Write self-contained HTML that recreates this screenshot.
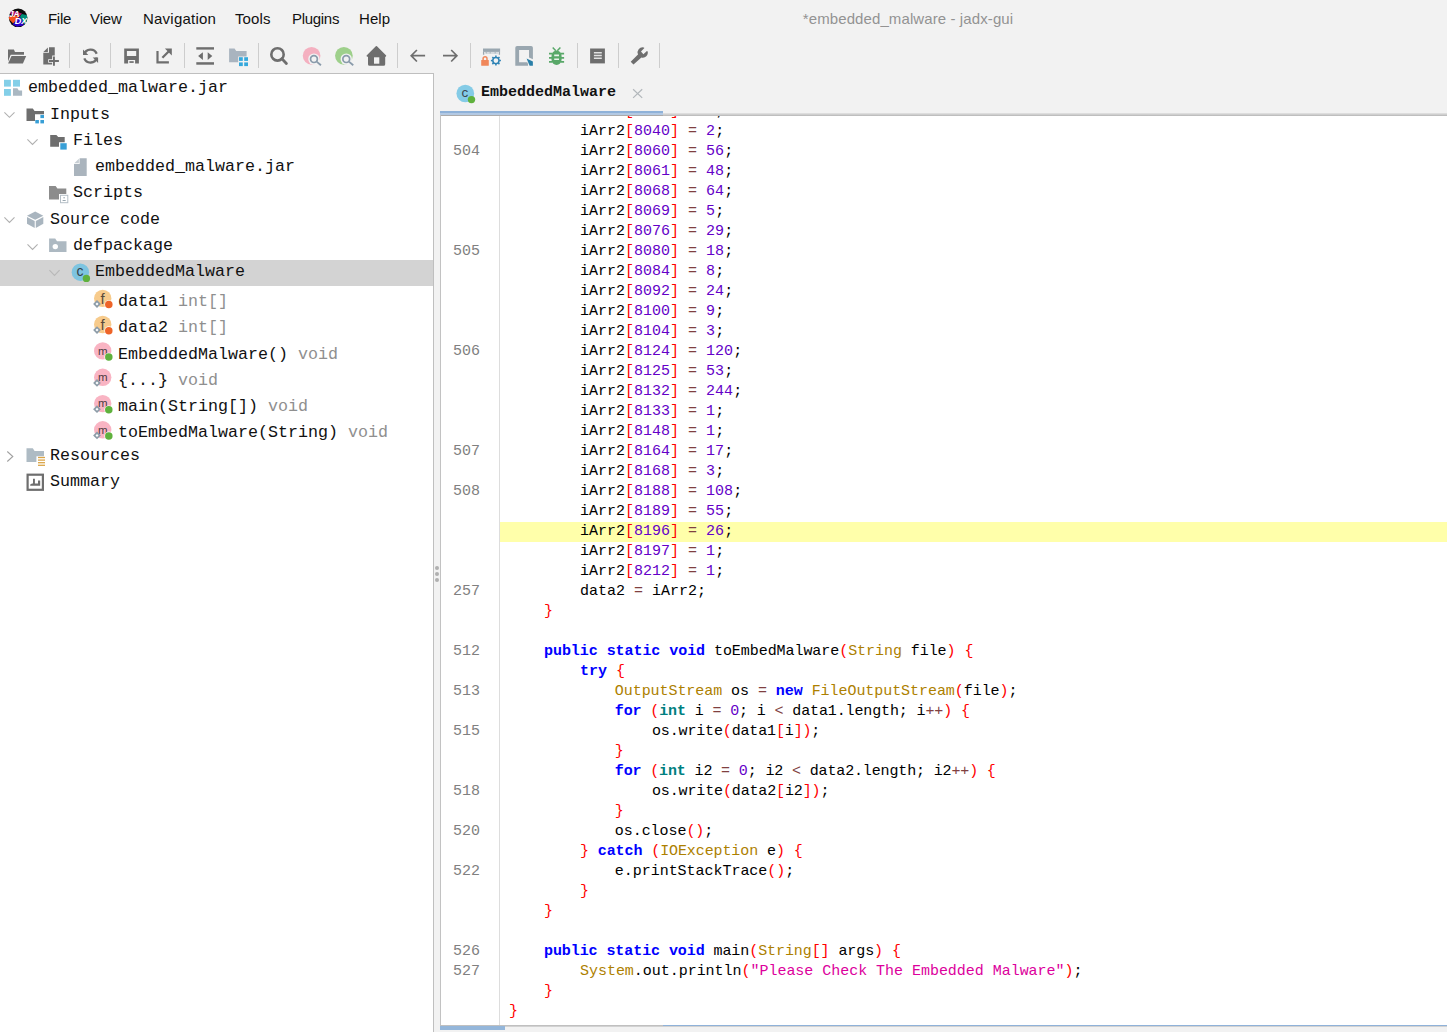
<!DOCTYPE html>
<html><head><meta charset="utf-8"><title>jadx-gui</title>
<style>
html,body{margin:0;padding:0}
body{width:1447px;height:1032px;background:#f2f2f2;position:relative;overflow:hidden;font-family:"Liberation Sans",sans-serif;color:#000}
.ic,.chev{position:absolute;display:block;overflow:visible}
.mi{position:absolute;top:10px;font-size:15px;line-height:18px;white-space:nowrap;color:#111}
#title{position:absolute;top:10px;left:708px;width:400px;text-align:center;font-size:15px;line-height:18px;color:#939393;white-space:nowrap;letter-spacing:0.1px}
.sep{position:absolute;top:43px;width:1px;height:25px;background:#cdcdcd}
#treetop{position:absolute;left:0;top:73px;width:434px;height:1.3px;background:#bfbfbf}
#tree{position:absolute;left:0;top:74px;width:433px;height:958px;background:#fff;overflow:hidden}
#tree .in{position:absolute;left:0;top:-74px;width:433px;height:1032px}
#sel{position:absolute;left:0;top:260px;width:433px;height:26px;background:#d3d3d3}
.tr{position:absolute;font-family:"Liberation Mono",monospace;font-size:16.66px;line-height:26px;white-space:pre;color:#111}
.tr i{font-style:normal;color:#8f8f8f}
#div{position:absolute;left:433px;top:73px;width:7px;height:959px;background:#f2f2f2;border-left:1px solid #bfbfbf;box-sizing:border-box}
.dot{position:absolute;left:435.25px;width:3.5px;height:3.5px;border-radius:2px;background:#b0b0b0}
#tabtxt{position:absolute;left:481px;top:84px;font-family:"Liberation Mono",monospace;font-weight:bold;font-size:15px;line-height:18px;color:#111;white-space:pre}
#tabx{position:absolute;left:632px;top:88px}
#tabul{position:absolute;left:440px;top:111px;width:223px;height:4.5px;background:linear-gradient(#8fb2d9 0,#8fb2d9 44%,#b3c9e3 44%,#b3c9e3 78%,#ababab 78%)}
#tabln{position:absolute;left:663px;top:112.5px;width:784px;height:3px;background:linear-gradient(#e4e4e4,#cfcfcf 50%,#b6b6b6)}
#ed{position:absolute;left:441px;top:115.5px;width:1006px;height:909.5px;background:#fff;overflow:hidden}
#ed .in{position:absolute;left:-441px;top:-115.5px;width:1447px;height:1032px}
#edl{position:absolute;left:440px;top:115px;width:1px;height:911px;background:#c2c2c2}
#gsep{position:absolute;left:499px;top:116px;width:1px;height:909px;background:#dddddd}
.cl,.ln{position:absolute;font-family:"Liberation Mono",monospace;font-size:15px;line-height:20px;height:20px;white-space:pre;color:#000}
.ln{left:453px;color:#808080}
.hl{position:absolute;left:500px;width:947px;height:20px;background:#ffffaa}
.k{color:#0000ff;font-weight:bold}
.t{color:#008080;font-weight:bold}
.f{color:#ad8000}
.n{color:#6400c8}
.s{color:#dc009c}
.p{color:#ff0000}
.o{color:#804040}
#botln{position:absolute;left:440px;top:1025px;width:1007px;height:1.7px;background:linear-gradient(#c0c0c0 0,#c0c0c0 60%,#d2d2d2 60%)}
#botbl{position:absolute;left:440px;top:1026px;width:65px;height:4px;background:#94b6da}
#botbl2{position:absolute;left:663px;top:1025px;width:784px;height:1px;background:#8fb2d9}
</style></head>
<body>
<svg class="ic" style="left:4px;top:4px" width="30" height="28" viewBox="4 4 30 28">
<defs><clipPath id="lc"><circle cx="18.1" cy="17.8" r="9.3"/></clipPath></defs>
<circle cx="18.1" cy="17.8" r="9.3" fill="#0c0c0c"/>
<g clip-path="url(#lc)">
<path d="M11.6 10.2L22 13.4L20.3 15.6H12.9L9.6 13Z" fill="#b0106c"/>
<path d="M8.4 16.2L20.4 15.3L13.2 23.6L8.6 18.8Z" fill="#f4511e"/>
<path d="M19.5 16.6L23.2 20.3L23.6 25.6L17 26.7L12.6 24.6Z" fill="#2a00c8"/>
<path d="M21.8 13.9L27.4 15.2L27.6 21.6L24.1 24.3L20 16.7Z" fill="#008f78"/>
<text x="9" y="17.3" font-family="Liberation Sans, sans-serif" font-weight="bold" font-style="italic" font-size="9.2" fill="#fff" textLength="10.6" lengthAdjust="spacingAndGlyphs">JA</text>
<text x="14.8" y="24.4" font-family="Liberation Sans, sans-serif" font-weight="bold" font-style="italic" font-size="8.8" fill="#fff" textLength="12.6" lengthAdjust="spacingAndGlyphs">DX</text>
</g>
</svg>
<div class="mi" style="left:48px;letter-spacing:-0.3px">File</div><div class="mi" style="left:90px;letter-spacing:-0.1px">View</div><div class="mi" style="left:143px;letter-spacing:0.22px">Navigation</div><div class="mi" style="left:235px;letter-spacing:0.12px">Tools</div><div class="mi" style="left:292px;letter-spacing:-0.3px">Plugins</div><div class="mi" style="left:359px;letter-spacing:0.08px">Help</div>
<div id="title">*embedded_malware - jadx-gui</div>
<div class="sep" style="left:69px"></div><div class="sep" style="left:110px"></div><div class="sep" style="left:184px"></div><div class="sep" style="left:258px"></div><div class="sep" style="left:397px"></div><div class="sep" style="left:470px"></div><div class="sep" style="left:577px"></div><div class="sep" style="left:618px"></div><div class="sep" style="left:659px"></div>
<svg class="ic" style="left:0;top:40px" width="700" height="34" viewBox="0 40 700 34"><path d="M8 49.6H13.9L15 52H24V54.7H10.7L8 61.6Z" fill="#6e6e6e"/><path d="M11.5 56H26.2L22.9 63.4H8.1Z" fill="#6e6e6e"/><path d="M47.9 47.4V51.9H43.4Z" fill="#6e6e6e"/><path d="M49 47.2H54.75V58H52.6V64.4H43.3V52.7H49Z" fill="#6e6e6e"/><path d="M53.95 55.6V65.7M48.2 61H58.9" stroke="#f2f2f2" stroke-width="3.5" fill="none"/><path d="M53.95 56.4V65.7M49 61H58.9" stroke="#6e6e6e" stroke-width="1.9" fill="none"/><path d="M84.2 54.6A6.6 6.6 0 0 1 96.7 53.8M96.8 57.6A6.6 6.6 0 0 1 84.3 58.4" fill="none" stroke="#6e6e6e" stroke-width="2.3"/><path d="M83 49.6V54.9H88.3Z M98.1 62.9V57.5H92.7Z" fill="#6e6e6e"/><path d="M124.2 48.5H138.9V63.5H124.2Z M126.9 51.1V56.1H136.2V51.1Z M128.1 60.1V63.5H135.1V60.1Z" fill-rule="evenodd" fill="#6e6e6e"/><rect x="129.4" y="61.2" width="4.3" height="1.7" fill="#6e6e6e"/><path d="M157.5 51.1V62.45H168.9" fill="none" stroke="#6e6e6e" stroke-width="2.2"/><path d="M162.4 57.8L169.4 50.8" stroke="#6e6e6e" stroke-width="2.3"/><path d="M164.9 48.6H171.8V55.6Z" fill="#6e6e6e"/><rect x="196.3" y="47.2" width="17.7" height="2.4" fill="#6e6e6e"/><rect x="196.3" y="62.2" width="17.7" height="2.5" fill="#6e6e6e"/><path d="M198.1 56.1L202.9 52.3V59.9Z M212.3 56.1L207.7 52.3V59.9Z" fill="#6e6e6e"/><path d="M229.1 48.5H234.6L236.2 51.1H246.6V56.4H238.2V62.2H229.1Z" fill="#a9b4bf"/><rect x="239" y="57.2" width="3.8" height="3.7" fill="#35a8dc"/><rect x="244.2" y="57.2" width="3.8" height="3.7" fill="#35a8dc"/><rect x="239" y="62.4" width="3.8" height="3.7" fill="#35a8dc"/><rect x="244.2" y="62.4" width="3.8" height="3.7" fill="#35a8dc"/><circle cx="277.5" cy="54.4" r="6.2" fill="none" stroke="#6e6e6e" stroke-width="2.6"/><path d="M281.9 58.8L286.4 63.4" stroke="#6e6e6e" stroke-width="2.8" stroke-linecap="round"/><circle cx="311.6" cy="55.85" r="8.85" fill="#f4b0c0"/><circle cx="313.95" cy="59.1" r="5.7" fill="#f2f2f2"/><path d="M316.95 61.8L321.35 65.7" stroke="#f2f2f2" stroke-width="3.2"/><circle cx="313.95" cy="59.1" r="3.4" fill="none" stroke="#8a9bab" stroke-width="1.7"/><path d="M316.65 61.6L320.95 65.3" stroke="#8a9bab" stroke-width="1.8"/><circle cx="343.9" cy="55.85" r="8.85" fill="#9ed08b"/><circle cx="346.25" cy="59.1" r="5.7" fill="#f2f2f2"/><path d="M349.25 61.8L353.65 65.7" stroke="#f2f2f2" stroke-width="3.2"/><circle cx="346.25" cy="59.1" r="3.4" fill="none" stroke="#8a9bab" stroke-width="1.7"/><path d="M348.95 61.6L353.25 65.3" stroke="#8a9bab" stroke-width="1.8"/><path d="M376.4 46.9L385.4 55.9H384.4V64.2A0.8 0.8 0 0 1 383.6 65H369.6A0.8 0.8 0 0 1 368.8 64.2V55.9H367.4Z" fill="#6e6e6e" stroke="#6e6e6e" stroke-width="1.6" stroke-linejoin="round"/><rect x="374" y="57.3" width="5.3" height="6.4" fill="#f2f2f2"/><path d="M425.1 55.7H411.6M416.9 50L411.2 55.7L416.9 61.5" fill="none" stroke="#6e6e6e" stroke-width="1.7"/><path d="M443 55.7H456.9M451.2 50L456.9 55.7L451.2 61.5" fill="none" stroke="#6e6e6e" stroke-width="1.7"/><rect x="483" y="48.5" width="17.1" height="3.4" fill="#9aa7b0"/><path d="M483.6 51.9V54.8M486.2 51.9V53.4M490.2 51.9V53.6M495.2 51.9V53.4M499.4 51.9V54.8" stroke="#9aa7b0" stroke-width="1.3" fill="none"/><path d="M486.2 53H498" stroke="#c3ccd2" stroke-width="1.2"/><rect x="481.2" y="59.9" width="7.6" height="5.8" rx="0.5" fill="#f0875a"/><path d="M483.1 60.2V58.6A1.95 1.95 0 0 1 487 58.6V60.2" fill="none" stroke="#f0875a" stroke-width="1.5"/><circle cx="495.9" cy="60.6" r="3.1" fill="none" stroke="#2e83b5" stroke-width="1.5"/><path d="M499.20 60.60L500.90 60.60" stroke="#2e83b5" stroke-width="1.5"/><path d="M498.23 62.93L499.44 64.14" stroke="#2e83b5" stroke-width="1.5"/><path d="M495.90 63.90L495.90 65.60" stroke="#2e83b5" stroke-width="1.5"/><path d="M493.57 62.93L492.36 64.14" stroke="#2e83b5" stroke-width="1.5"/><path d="M492.60 60.60L490.90 60.60" stroke="#2e83b5" stroke-width="1.5"/><path d="M493.57 58.27L492.36 57.06" stroke="#2e83b5" stroke-width="1.5"/><path d="M495.90 57.30L495.90 55.60" stroke="#2e83b5" stroke-width="1.5"/><path d="M498.23 58.27L499.44 57.06" stroke="#2e83b5" stroke-width="1.5"/><path d="M517.1 46H531.1A1.8 1.8 0 0 1 532.9 47.8V59.2L529 57.4V50H519.1V62.2H528V65.7H515.3V47.8A1.8 1.8 0 0 1 517.1 46Z" fill="#9aa7b0"/><path d="M526.6 58.4L532.9 61.6V65.7H529.6Z" fill="#f2f2f2" stroke="#f2f2f2" stroke-width="1.6"/><path d="M526.6 58.4L532.9 61.6V65.7H529.6Z" fill="#2a7fa8"/><path d="M552.7 47.6L555.8 50.8M560.4 47.6L557.3 50.8" stroke="#59a869" stroke-width="1.5"/><path d="M551.5 56A5.05 5.5 0 0 1 561.6 56V59.6A5.05 5.3 0 0 1 551.5 59.6Z" fill="#59a869"/><path d="M549 53.6H552.4M549 57.9H552.4M549 61.9H552.4M560.6 53.6H564.1M560.6 57.9H564.1M560.6 61.9H564.1" stroke="#59a869" stroke-width="1.6"/><path d="M554.2 55.4H559M554.2 59.2H559" stroke="#eaf3ec" stroke-width="1.6"/><rect x="590.1" y="48.5" width="14.8" height="14.9" fill="#6e6e6e"/><path d="M593.9 52.8H601.8M593.9 55.5H601.8M593.9 58.2H601.8" stroke="#e2e2e2" stroke-width="1.4"/><path d="M644.4 48.1L641 51.4L643.4 54.2L646.9 51L647.7 51.4A5.1 5.1 0 0 1 641.4 57.5L633.5 64.5L630.7 61.7L638 54.6A5.1 5.1 0 0 1 643.8 47.5Z" fill="#6e6e6e"/></svg>
<div id="treetop"></div>
<div id="tree"><div class="in">
<div id="sel"></div>
<svg class="ic" style="left:0;top:0" width="433" height="1032" viewBox="0 0 433 1032"><rect x="4" y="79.8" width="6.9" height="6.8" fill="#83cfe8"/><rect x="13" y="79.8" width="7" height="6.8" fill="#83cfe8"/><rect x="4" y="89" width="6.9" height="6.8" fill="#83cfe8"/><path d="M13 88.3H17.4L18.8 90.6H22.1V95.8H13Z" fill="#aab8c2"/><path d="M4.4 112.3 L9.45 117.3 L14.5 112.3" fill="none" stroke="#b0b0b0" stroke-width="1.1"/><path d="M26.5 108.4 H32.8 L34.6 111 H44 V114.3 H35 V120.9 H26.5 Z" fill="#6e6e6e"/><rect x="40.4" y="114.9" width="3.6" height="3.2" fill="#389fd6"/><rect x="35.3" y="120" width="3.6" height="3.4" fill="#389fd6"/><rect x="40.4" y="120" width="3.6" height="3.4" fill="#389fd6"/><path d="M27.4 139.3 L32.5 144.4 L37.6 139.3" fill="none" stroke="#b0b0b0" stroke-width="1.1"/><path d="M50.2 135.1 H56.4 L58.2 137.1 H64.7 V142.3 H59 V146.7 H50.2 Z" fill="#6e6e6e"/><rect x="60.3" y="143.2" width="6.4" height="6.4" fill="#389fd6"/><path d="M79.6 158.2H86.7V176H74V163.9H79.6Z" fill="#aab4bd"/><path d="M78.9 158.8V163.2H74.3Z" fill="#c6cdd3"/><path d="M49 186 H55.6 L57.4 188.4 H66.3 V194.1 H59 V199.6 H49 Z" fill="#8c8c8c"/><rect x="60.5" y="195.3" width="7.3" height="7.4" fill="#fff" stroke="#b4bec6" stroke-width="1"/><circle cx="64.1" cy="197.8" r="0.8" fill="#9aa7b0"/><path d="M62.6 200.5H65.7" stroke="#9aa7b0" stroke-width="1"/><path d="M4.4 217.3 L9.45 222.5 L14.5 217.3" fill="none" stroke="#b0b0b0" stroke-width="1.1"/><path d="M35.2 211.5L43.3 215.7L35.2 219.7L27 215.7Z" fill="#a9b5bf"/><path d="M27 217.1L34.7 221V228L27 223.7Z" fill="#a9b5bf"/><path d="M43.3 217.1L35.8 221V228L43.3 223.7Z" fill="#a9b5bf"/><path d="M27.5 244.4 L32.55 249.5 L37.6 244.4" fill="none" stroke="#b0b0b0" stroke-width="1.1"/><path d="M49.1 238.5 H55.2 L57 241.2 H66.5 V252 H49.1 Z" fill="#adb9c2"/><circle cx="55.3" cy="246.6" r="2.7" fill="#fff"/><path d="M49.4 270.2 L54.5 275.5 L59.6 270.2" fill="none" stroke="#b8b8b8" stroke-width="1.1"/><circle cx="80.4" cy="272.2" r="8.7" fill="#7dc4e0"/><text x="80.1" y="275.9" font-family="Liberation Sans, sans-serif" font-size="14" text-anchor="middle" fill="#33404a">c</text><circle cx="86.4" cy="278.4" r="3.7" fill="#5fb13d"/><circle cx="102.7" cy="298.4" r="8.7" fill="#f7cb8c"/><text x="102.5" y="303.6" font-family="Liberation Sans, sans-serif" font-size="15" text-anchor="middle" fill="#5a4a3a">f</text><path d="M97 300.1L100.9 304L97 307.9L93.1 304Z" fill="#8d9ca8"/><path d="M97 302.5L98.5 304L97 305.5L95.5 304Z" fill="#fff"/><circle cx="108.8" cy="304.6" r="4.4" fill="#fff"/><circle cx="108.8" cy="304.6" r="3.75" fill="#ee6428"/><circle cx="102.7" cy="324.5" r="8.7" fill="#f7cb8c"/><text x="102.5" y="329.7" font-family="Liberation Sans, sans-serif" font-size="15" text-anchor="middle" fill="#5a4a3a">f</text><path d="M97 326.2L100.9 330.1L97 334L93.1 330.1Z" fill="#8d9ca8"/><path d="M97 328.6L98.5 330.1L97 331.6L95.5 330.1Z" fill="#fff"/><circle cx="108.8" cy="330.7" r="4.4" fill="#fff"/><circle cx="108.8" cy="330.7" r="3.75" fill="#ee6428"/><circle cx="102.7" cy="350.9" r="8.7" fill="#f9b4c3"/><text x="102.8" y="354.6" font-family="Liberation Sans, sans-serif" font-size="11.5" text-anchor="middle" fill="#4a3a40">m</text><circle cx="108.8" cy="357.1" r="4.4" fill="#fff"/><circle cx="108.8" cy="357.1" r="3.75" fill="#5fb13d"/><circle cx="102.7" cy="377.3" r="8.7" fill="#f9b4c3"/><text x="102.8" y="381" font-family="Liberation Sans, sans-serif" font-size="11.5" text-anchor="middle" fill="#4a3a40">m</text><path d="M97 379L100.9 382.9L97 386.8L93.1 382.9Z" fill="#8d9ca8"/><path d="M97 381.4L98.5 382.9L97 384.4L95.5 382.9Z" fill="#fff"/><circle cx="102.7" cy="403.6" r="8.7" fill="#f9b4c3"/><text x="102.8" y="407.3" font-family="Liberation Sans, sans-serif" font-size="11.5" text-anchor="middle" fill="#4a3a40">m</text><path d="M97 405.3L100.9 409.2L97 413.1L93.1 409.2Z" fill="#8d9ca8"/><path d="M97 407.7L98.5 409.2L97 410.7L95.5 409.2Z" fill="#fff"/><circle cx="108.8" cy="409.8" r="4.4" fill="#fff"/><circle cx="108.8" cy="409.8" r="3.75" fill="#5fb13d"/><circle cx="102.7" cy="429.8" r="8.7" fill="#f9b4c3"/><text x="102.8" y="433.5" font-family="Liberation Sans, sans-serif" font-size="11.5" text-anchor="middle" fill="#4a3a40">m</text><path d="M97 431.5L100.9 435.4L97 439.3L93.1 435.4Z" fill="#8d9ca8"/><path d="M97 433.9L98.5 435.4L97 436.9L95.5 435.4Z" fill="#fff"/><circle cx="108.8" cy="436" r="4.4" fill="#fff"/><circle cx="108.8" cy="436" r="3.75" fill="#5fb13d"/><path d="M7.3 451.5 L12.8 456.5 L7.3 461.5" fill="none" stroke="#a0a0a0" stroke-width="1.1"/><path d="M26.5 448.2 H32.8 L34.6 450.9 H44 V456.3 H36.4 V461.9 H26.5 Z" fill="#aebbc4"/><path d="M38 457.5H45" stroke="#dba548" stroke-width="1.3"/><path d="M38 460.1H45" stroke="#dba548" stroke-width="1.3"/><path d="M38 462.7H45" stroke="#dba548" stroke-width="1.3"/><path d="M38 465.3H45" stroke="#dba548" stroke-width="1.3"/><rect x="27.6" y="474.7" width="15.3" height="15.1" fill="#fff" stroke="#6e6e6e" stroke-width="2.2"/><path d="M30.2 485.8V484.6L32 483.4H33V478.8H34.9V483.4H38V480.4H40.2V485.8Z" fill="#6e6e6e"/></svg>
<div class="tr" style="left:28px;top:75.2px">embedded_malware.jar</div>
<div class="tr" style="left:50px;top:101.5px">Inputs</div>
<div class="tr" style="left:73px;top:127.7px">Files</div>
<div class="tr" style="left:95px;top:153.9px">embedded_malware.jar</div>
<div class="tr" style="left:73px;top:180.1px">Scripts</div>
<div class="tr" style="left:50px;top:206.5px">Source code</div>
<div class="tr" style="left:73px;top:232.7px">defpackage</div>
<div class="tr" style="left:95px;top:258.9px">EmbeddedMalware</div>
<div class="tr" style="left:118px;top:289.2px">data1 <i>int[]</i></div>
<div class="tr" style="left:118px;top:315.3px">data2 <i>int[]</i></div>
<div class="tr" style="left:118px;top:341.7px">EmbeddedMalware() <i>void</i></div>
<div class="tr" style="left:118px;top:367.9px">{...} <i>void</i></div>
<div class="tr" style="left:118px;top:394.1px">main(String[]) <i>void</i></div>
<div class="tr" style="left:118px;top:420.3px">toEmbedMalware(String) <i>void</i></div>
<div class="tr" style="left:50px;top:443.3px">Resources</div>
<div class="tr" style="left:50px;top:469.3px">Summary</div>
</div></div>
<div id="div"></div>
<div class="dot" style="top:566.05px"></div><div class="dot" style="top:572.25px"></div><div class="dot" style="top:578.45px"></div>
<svg class="ic" style="left:440px;top:74px" width="60" height="40" viewBox="440 74 60 40"><circle cx="465.3" cy="93.5" r="8.85" fill="#84cbe6"/><text x="464.9" y="97.1" font-family="Liberation Sans, sans-serif" font-size="13.5" text-anchor="middle" fill="#3a4650">c</text><circle cx="471.5" cy="99.6" r="3.7" fill="#5fb13d"/></svg>
<div id="tabtxt">EmbeddedMalware</div>
<svg id="tabx" class="ic" width="12" height="12" viewBox="632 88 12 12"><path d="M633.1 89.2L642.2 97.9M642.2 89.2L633.1 97.9" stroke="#b2b7bb" stroke-width="1.2" fill="none"/></svg>
<div id="tabln"></div>
<div id="tabul"></div>
<div id="edl"></div>
<div id="ed"><div class="in">
<div class="cl" style="left:580px;top:102px">iArr2<span class="p">[</span><span class="n">8036</span><span class="p">]</span> <span class="o">=</span> <span class="n">1</span>;</div>
<div class="cl" style="left:580px;top:122px">iArr2<span class="p">[</span><span class="n">8040</span><span class="p">]</span> <span class="o">=</span> <span class="n">2</span>;</div>
<div class="cl" style="left:580px;top:142px">iArr2<span class="p">[</span><span class="n">8060</span><span class="p">]</span> <span class="o">=</span> <span class="n">56</span>;</div>
<div class="cl" style="left:580px;top:162px">iArr2<span class="p">[</span><span class="n">8061</span><span class="p">]</span> <span class="o">=</span> <span class="n">48</span>;</div>
<div class="cl" style="left:580px;top:182px">iArr2<span class="p">[</span><span class="n">8068</span><span class="p">]</span> <span class="o">=</span> <span class="n">64</span>;</div>
<div class="cl" style="left:580px;top:202px">iArr2<span class="p">[</span><span class="n">8069</span><span class="p">]</span> <span class="o">=</span> <span class="n">5</span>;</div>
<div class="cl" style="left:580px;top:222px">iArr2<span class="p">[</span><span class="n">8076</span><span class="p">]</span> <span class="o">=</span> <span class="n">29</span>;</div>
<div class="cl" style="left:580px;top:242px">iArr2<span class="p">[</span><span class="n">8080</span><span class="p">]</span> <span class="o">=</span> <span class="n">18</span>;</div>
<div class="cl" style="left:580px;top:262px">iArr2<span class="p">[</span><span class="n">8084</span><span class="p">]</span> <span class="o">=</span> <span class="n">8</span>;</div>
<div class="cl" style="left:580px;top:282px">iArr2<span class="p">[</span><span class="n">8092</span><span class="p">]</span> <span class="o">=</span> <span class="n">24</span>;</div>
<div class="cl" style="left:580px;top:302px">iArr2<span class="p">[</span><span class="n">8100</span><span class="p">]</span> <span class="o">=</span> <span class="n">9</span>;</div>
<div class="cl" style="left:580px;top:322px">iArr2<span class="p">[</span><span class="n">8104</span><span class="p">]</span> <span class="o">=</span> <span class="n">3</span>;</div>
<div class="cl" style="left:580px;top:342px">iArr2<span class="p">[</span><span class="n">8124</span><span class="p">]</span> <span class="o">=</span> <span class="n">120</span>;</div>
<div class="cl" style="left:580px;top:362px">iArr2<span class="p">[</span><span class="n">8125</span><span class="p">]</span> <span class="o">=</span> <span class="n">53</span>;</div>
<div class="cl" style="left:580px;top:382px">iArr2<span class="p">[</span><span class="n">8132</span><span class="p">]</span> <span class="o">=</span> <span class="n">244</span>;</div>
<div class="cl" style="left:580px;top:402px">iArr2<span class="p">[</span><span class="n">8133</span><span class="p">]</span> <span class="o">=</span> <span class="n">1</span>;</div>
<div class="cl" style="left:580px;top:422px">iArr2<span class="p">[</span><span class="n">8148</span><span class="p">]</span> <span class="o">=</span> <span class="n">1</span>;</div>
<div class="cl" style="left:580px;top:442px">iArr2<span class="p">[</span><span class="n">8164</span><span class="p">]</span> <span class="o">=</span> <span class="n">17</span>;</div>
<div class="cl" style="left:580px;top:462px">iArr2<span class="p">[</span><span class="n">8168</span><span class="p">]</span> <span class="o">=</span> <span class="n">3</span>;</div>
<div class="cl" style="left:580px;top:482px">iArr2<span class="p">[</span><span class="n">8188</span><span class="p">]</span> <span class="o">=</span> <span class="n">108</span>;</div>
<div class="cl" style="left:580px;top:502px">iArr2<span class="p">[</span><span class="n">8189</span><span class="p">]</span> <span class="o">=</span> <span class="n">55</span>;</div>
<div class="hl" style="top:522px"></div>
<div class="cl" style="left:580px;top:522px">iArr2<span class="p">[</span><span class="n">8196</span><span class="p">]</span> <span class="o">=</span> <span class="n">26</span>;</div>
<div class="cl" style="left:580px;top:542px">iArr2<span class="p">[</span><span class="n">8197</span><span class="p">]</span> <span class="o">=</span> <span class="n">1</span>;</div>
<div class="cl" style="left:580px;top:562px">iArr2<span class="p">[</span><span class="n">8212</span><span class="p">]</span> <span class="o">=</span> <span class="n">1</span>;</div>
<div class="cl" style="left:580px;top:582px">data2 <span class="o">=</span> iArr2;</div>
<div class="cl" style="left:544px;top:602px"><span class="p">}</span></div>
<div class="cl" style="left:544px;top:642px;letter-spacing:-0.057px"><span class="k">public</span> <span class="k">static</span> <span class="k">void</span> toEmbedMalware<span class="p">(</span><span class="f">String</span> file<span class="p">)</span> <span class="p">{</span></div>
<div class="cl" style="left:580px;top:662px"><span class="k">try</span> <span class="p">{</span></div>
<div class="cl" style="left:614.8px;top:682px;letter-spacing:-0.055px"><span class="f">OutputStream</span> os <span class="o">=</span> <span class="k">new</span> <span class="f">FileOutputStream</span><span class="p">(</span>file<span class="p">)</span>;</div>
<div class="cl" style="left:614.8px;top:702px;letter-spacing:-0.128px"><span class="k">for</span> <span class="p">(</span><span class="t">int</span> i <span class="o">=</span> <span class="n">0</span>; i <span class="o">&lt;</span> data1.length; i<span class="o">++</span><span class="p">)</span> <span class="p">{</span></div>
<div class="cl" style="left:652px;top:722px;letter-spacing:-0.15px">os.write<span class="p">(</span>data1<span class="p">[</span>i<span class="p">])</span>;</div>
<div class="cl" style="left:614.8px;top:742px"><span class="p">}</span></div>
<div class="cl" style="left:614.8px;top:762px;letter-spacing:-0.144px"><span class="k">for</span> <span class="p">(</span><span class="t">int</span> i2 <span class="o">=</span> <span class="n">0</span>; i2 <span class="o">&lt;</span> data2.length; i2<span class="o">++</span><span class="p">)</span> <span class="p">{</span></div>
<div class="cl" style="left:652px;top:782px;letter-spacing:-0.142px">os.write<span class="p">(</span>data2<span class="p">[</span>i2<span class="p">])</span>;</div>
<div class="cl" style="left:614.8px;top:802px"><span class="p">}</span></div>
<div class="cl" style="left:614.8px;top:822px;letter-spacing:-0.05px">os.close<span class="p">()</span>;</div>
<div class="cl" style="left:580px;top:842px;letter-spacing:-0.1px"><span class="p">}</span> <span class="k">catch</span> <span class="p">(</span><span class="f">IOException</span> e<span class="p">)</span> <span class="p">{</span></div>
<div class="cl" style="left:614.8px;top:862px;letter-spacing:-0.03px">e.printStackTrace<span class="p">()</span>;</div>
<div class="cl" style="left:580px;top:882px"><span class="p">}</span></div>
<div class="cl" style="left:544px;top:902px"><span class="p">}</span></div>
<div class="cl" style="left:544px;top:942px;letter-spacing:-0.08px"><span class="k">public</span> <span class="k">static</span> <span class="k">void</span> main<span class="p">(</span><span class="f">String</span><span class="p">[]</span> args<span class="p">)</span> <span class="p">{</span></div>
<div class="cl" style="left:580px;top:962px;letter-spacing:-0.03px"><span class="f">System</span>.out.println<span class="p">(</span><span class="s">"Please Check The Embedded Malware"</span><span class="p">)</span>;</div>
<div class="cl" style="left:544px;top:982px"><span class="p">}</span></div>
<div class="cl" style="left:509px;top:1002px"><span class="p">}</span></div>
<div class="ln" style="top:142px">504</div>
<div class="ln" style="top:242px">505</div>
<div class="ln" style="top:342px">506</div>
<div class="ln" style="top:442px">507</div>
<div class="ln" style="top:482px">508</div>
<div class="ln" style="top:582px">257</div>
<div class="ln" style="top:642px">512</div>
<div class="ln" style="top:682px">513</div>
<div class="ln" style="top:722px">515</div>
<div class="ln" style="top:782px">518</div>
<div class="ln" style="top:822px">520</div>
<div class="ln" style="top:862px">522</div>
<div class="ln" style="top:942px">526</div>
<div class="ln" style="top:962px">527</div>
</div></div>
<div id="gsep"></div>
<div id="botln"></div>
<div id="botbl2"></div>
<div id="botbl"></div>
</body></html>
